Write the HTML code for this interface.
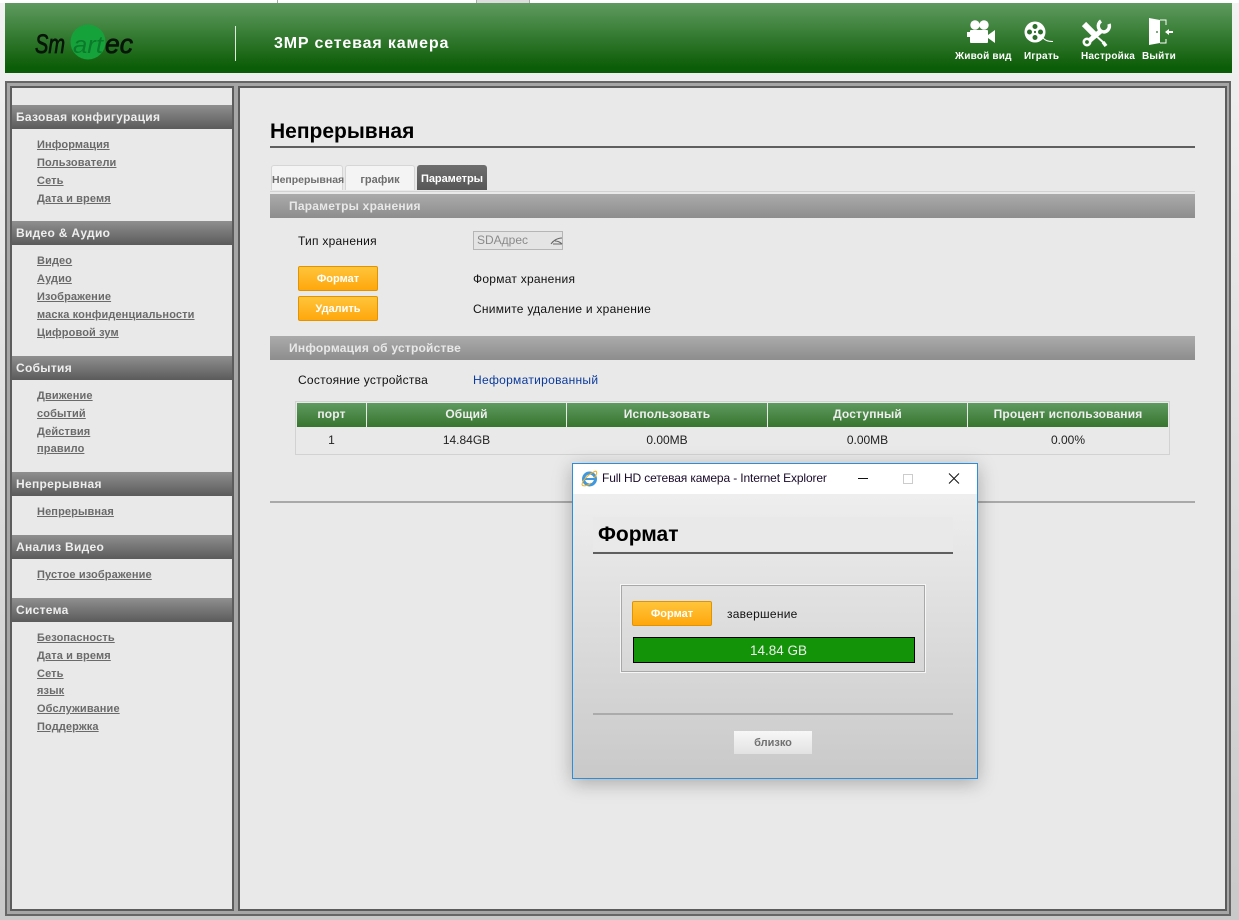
<!DOCTYPE html>
<html><head><meta charset="utf-8"><style>
html,body{margin:0;padding:0;width:1239px;height:920px;overflow:hidden;background:linear-gradient(#f2f2f2,#c9c9c9);font-family:"Liberation Sans",Arial,sans-serif;color:#111}
.a{position:absolute;white-space:nowrap}
#hdr{left:5px;top:3px;width:1227px;height:70px;background:linear-gradient(#5f9a5f,#0c5d07 92%)}
#outer{left:5px;top:81px;width:1222px;height:831px;border:2px solid #666;background:#a6a6a6}
#side{left:10px;top:86px;width:220px;height:821px;border:2px solid #5c5c5c;background:#e9e9e9}
#main{left:238px;top:86px;width:985px;height:821px;border:2px solid #5c5c5c;background:#e9e9e9}
.sh{left:12px;width:220px;height:24px;line-height:25px;background:linear-gradient(#8f8f8f,#5b5b5b);color:#eee;font-weight:bold;font-size:12px;text-indent:4px;letter-spacing:.3px}
.lk{left:37px;margin-top:1px;font-size:11px;font-weight:bold;color:#6a6a6a;text-decoration:underline;line-height:14px;letter-spacing:.12px}
.bar{left:270px;width:925px;height:24px;line-height:25px;background:linear-gradient(#ababab,#8d8d8d);color:#e8e8e8;font-weight:bold;font-size:12px;text-indent:19px;letter-spacing:.22px}
.tab{top:165px;height:25px;box-sizing:border-box;border:1px solid #d6d6d6;border-bottom:0;border-radius:3px 3px 0 0;background:#f4f4f4;color:#6e6e6e;font-weight:bold;font-size:11px;line-height:29px;text-align:center}
.btn{width:78px;height:23px;box-sizing:content-box;border:1px solid #e29400;border-radius:2px;background:linear-gradient(#ffc53b,#ffa70c);color:#fff;font-weight:bold;font-size:11px;line-height:25px;text-align:center}
.t{font-size:12px;line-height:14px;color:#111;letter-spacing:.25px}
.th{top:403px;height:24px;line-height:22px;background:linear-gradient(#5f9a5f,#37752f);color:#eee;font-weight:bold;font-size:12px;text-align:center;letter-spacing:.15px}
.td{top:433px;font-size:12px;line-height:14px;text-align:center;color:#222}
.nav{top:51px;color:#fff;font-weight:bold;font-size:10px;line-height:12px;letter-spacing:.2px}
</style></head><body>
<div class="a" style="left:0;top:0;width:1239px;height:3px;background:#fff"></div>
<div class="a" style="left:277px;top:0;width:1px;height:3px;background:#aaa"></div>
<div class="a" style="left:476px;top:0;width:52px;height:3px;background:#ddd;border-left:1px solid #aaa;border-right:1px solid #aaa"></div>
<div class="a" id="hdr"></div>
<svg class="a" style="left:30px;top:22px" width="110" height="40"><circle cx="58" cy="20" r="17.500" fill="#16a23a"/>
<text x="5" y="31" font-family="Liberation Sans" font-style="italic" font-size="27" fill="#08160a" stroke="#08160a" stroke-width=".8" textLength="30" lengthAdjust="spacingAndGlyphs">Sm</text>
<text x="43" y="31" font-family="Liberation Sans" font-style="italic" font-size="24" fill="#0b7a2a" textLength="30" lengthAdjust="spacingAndGlyphs">art</text>
<text x="75" y="31" font-family="Liberation Sans" font-style="italic" font-size="27" fill="#08160a" stroke="#08160a" stroke-width=".8" textLength="28" lengthAdjust="spacingAndGlyphs">ec</text></svg>
<div class="a" style="left:235px;top:26px;width:1px;height:35px;background:#dfe9df"></div>
<div class="a" style="left:274px;top:34px;color:#fff;font-weight:bold;font-size:16px;line-height:19px;letter-spacing:.85px">3MP сетевая камера</div>

<svg class="a" style="left:960px;top:15px" width="230" height="35" fill="#fff">
<circle cx="15" cy="10" r="4.700"/><circle cx="24" cy="10" r="4.700"/><rect x="10" y="15" width="18" height="13" rx="1"/><rect x="7" y="17" width="3" height="5"/><path d="M28 20l7-5v13l-7-5z"/>
<circle cx="75" cy="17" r="10.500"/><g fill="#2a6e2a"><circle cx="75" cy="11.500" r="2.500"/><circle cx="75" cy="22.500" r="2.500"/><circle cx="69.500" cy="17" r="2.500"/><circle cx="80.500" cy="17" r="2.500"/><circle cx="75" cy="17" r="1.100"/></g><path d="M83 23c2 2 4 3.500 10 3.500" fill="none" stroke="#fff" stroke-width="1"/>
<g fill="none" stroke="#fff"><path d="M124 9l10 10" stroke-width="6"/><path d="M134 19l10 9" stroke-width="2"/><path d="M143 27l3 4" stroke-width="3.500"/><path d="M142 15l-13 11" stroke-width="5"/><circle cx="127" cy="27" r="3.200" stroke-width="2.600"/><path d="M141 6a6 6 0 0 0 3 11a6 6 0 0 0 5-8" stroke-width="3.500"/></g>
<path d="M189 3l11 2v23l-11 2z"/><circle cx="197" cy="17" r=".9" fill="#2a6e2a"/><path d="M200 5h6v5M206 24v4h-6" fill="none" stroke="#fff" stroke-width="1"/><path d="M205 17l4-3v2h4v2h-4v2z"/></svg>
<div class="a nav" style="left:955px">Живой вид</div>
<div class="a nav" style="left:1024px">Играть</div>
<div class="a nav" style="left:1081px">Настройка</div>
<div class="a nav" style="left:1142px">Выйти</div>

<div class="a" id="outer"></div><div class="a" id="side"></div><div class="a" id="main"></div>

<div class="a sh" style="top:105px">Базовая конфигурация</div>
<div class="a lk" style="top:137px">Информация</div><div class="a lk" style="top:155px">Пользователи</div><div class="a lk" style="top:173px">Сеть</div><div class="a lk" style="top:191px">Дата и время</div>
<div class="a sh" style="top:221px">Видео &amp; Аудио</div>
<div class="a lk" style="top:253px">Видео</div><div class="a lk" style="top:271px">Аудио</div><div class="a lk" style="top:289px">Изображение</div><div class="a lk" style="top:307px">маска конфиденциальности</div><div class="a lk" style="top:325px">Цифровой зум</div>
<div class="a sh" style="top:356px">События</div>
<div class="a lk" style="top:388px">Движение</div><div class="a lk" style="top:406px">событий</div><div class="a lk" style="top:424px">Действия</div><div class="a lk" style="top:441px">правило</div>
<div class="a sh" style="top:472px">Непрерывная</div>
<div class="a lk" style="top:504px">Непрерывная</div>
<div class="a sh" style="top:535px">Анализ Видео</div>
<div class="a lk" style="top:567px">Пустое изображение</div>
<div class="a sh" style="top:598px">Система</div>
<div class="a lk" style="top:630px">Безопасность</div><div class="a lk" style="top:648px">Дата и время</div><div class="a lk" style="top:666px">Сеть</div><div class="a lk" style="top:683px">язык</div><div class="a lk" style="top:701px">Обслуживание</div><div class="a lk" style="top:719px">Поддержка</div>

<div class="a" style="left:270px;top:120px;color:#000;font-weight:bold;font-size:21px;line-height:24px">Непрерывная</div>
<div class="a" style="left:270px;top:146px;width:925px;height:2px;background:#5f5f5f"></div>
<div class="a" style="left:270px;top:191px;width:925px;height:1px;background:#d2d2d2"></div>
<div class="a tab" style="left:271px;width:72px;font-size:10.500px;letter-spacing:0">Непрерывная</div>
<div class="a tab" style="left:345px;width:70px">график</div>
<div class="a tab" style="left:417px;width:70px;border:0;background:linear-gradient(#6e6e6e,#575757);color:#fff;line-height:29px;letter-spacing:-.05px">Параметры</div>

<div class="a bar" style="top:194px">Параметры хранения</div>
<div class="a t" style="left:298px;top:234px">Тип хранения</div>
<div class="a" style="left:473px;top:231px;width:88px;height:17px;border:1px solid #b5b5b5;background:#e4e4e4;color:#8a8a8a;font-size:12px;line-height:17px;text-indent:3px">SDАдрес</div>
<svg class="a" style="left:550px;top:235px" width="13" height="11"><path d="M1 9c2-3 6-6 11-6M5 6c2 0 5 1 7 3M3 9h9" fill="none" stroke="#666" stroke-width="1.100"/></svg>
<div class="a btn" style="left:298px;top:266px">Формат</div>
<div class="a t" style="left:473px;top:272px">Формат хранения</div>
<div class="a btn" style="left:298px;top:296px">Удалить</div>
<div class="a t" style="left:473px;top:302px">Снимите удаление и хранение</div>
<div class="a bar" style="top:336px">Информация об устройстве</div>
<div class="a t" style="left:298px;top:373px">Состояние устройства</div>
<div class="a t" style="left:473px;top:373px;color:#0a3a9c;letter-spacing:.3px">Неформатированный</div>

<div class="a" style="left:295px;top:401px;width:873px;height:52px;border:1px solid #d2d2d2"></div>
<div class="a th" style="left:297px;width:69px">порт</div>
<div class="a th" style="left:367px;width:199px">Общий</div>
<div class="a th" style="left:567px;width:200px">Использовать</div>
<div class="a th" style="left:768px;width:199px">Доступный</div>
<div class="a th" style="left:968px;width:200px">Процент использования</div>
<div class="a td" style="left:297px;width:69px">1</div>
<div class="a td" style="left:367px;width:199px">14.84GB</div>
<div class="a td" style="left:567px;width:200px">0.00MB</div>
<div class="a td" style="left:768px;width:199px">0.00MB</div>
<div class="a td" style="left:968px;width:200px">0.00%</div>
<div class="a" style="left:270px;top:501px;width:925px;height:2px;background:#a9a9a9"></div>

<div class="a" style="left:572px;top:463px;width:404px;height:314px;border:1px solid #2b8ddb;background:linear-gradient(#f2f2f2,#c9c9c9);box-shadow:0 4px 18px rgba(0,0,0,.28)"></div>
<div class="a" style="left:573px;top:464px;width:404px;height:30px;background:#fff"></div>
<svg class="a" style="left:581px;top:470px" width="17" height="17"><circle cx="8.500" cy="9" r="6" fill="#fff" stroke="#3f97de" stroke-width="3"/><path d="M3 9h12" stroke="#3f97de" stroke-width="2"/><path d="M1 15C1 10 9 3 15 1M15 1c2 2-1 6-2 7M1 15c2 2 7 0 9-2" fill="none" stroke="#f0b020" stroke-width="1"/></svg>
<div class="a" style="left:602px;top:471px;font-size:12px;line-height:15px;color:#1a0a2a;letter-spacing:-.13px">Full HD сетевая камера - Internet Explorer</div>
<svg class="a" style="left:850px;top:470px" width="120" height="16"><path d="M8 8.500h10" stroke="#111"/><rect x="53.500" y="4.500" width="9" height="9" fill="none" stroke="#ccc"/><path d="M99 3.500l10 10M109 3.500l-10 10" stroke="#111"/></svg>
<div class="a" style="left:593px;top:517px;width:360px;height:34px;background:#e9e9e9"></div>
<div class="a" style="left:598px;top:522px;color:#000;font-weight:bold;font-size:21px;line-height:25px">Формат</div>
<div class="a" style="left:593px;top:552px;width:360px;height:2px;background:#5f5f5f"></div>
<div class="a" style="left:621px;top:585px;width:302px;height:85px;border:1px solid #a8a8a8;box-shadow:0 0 0 1px #f6f6f6"></div>
<div class="a btn" style="left:632px;top:601px;height:23px">Формат</div>
<div class="a t" style="left:727px;top:607px">завершение</div>
<div class="a" style="left:633px;top:637px;width:280px;height:24px;border:1px solid #000;background:#129308;color:#eee;font-size:13.500px;line-height:25px;text-align:center;text-indent:9px">14.84 GB</div>
<div class="a" style="left:593px;top:713px;width:360px;height:2px;background:#ababab"></div>
<div class="a" style="left:734px;top:731px;width:78px;height:23px;background:linear-gradient(#f7f7f7,#e2e2e2);color:#707070;font-weight:bold;font-size:11px;line-height:25px;text-align:center">близко</div>
</body></html>
